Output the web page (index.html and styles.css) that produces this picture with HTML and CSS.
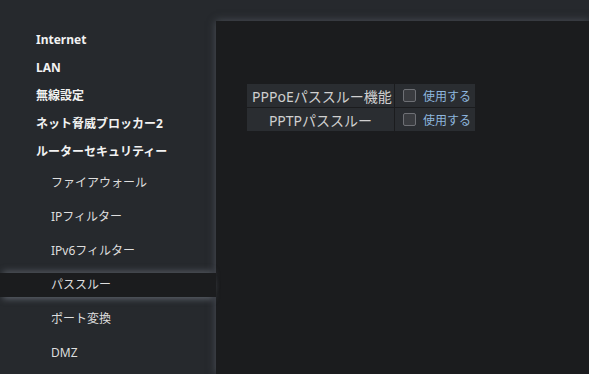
FILE: index.html
```html
<!DOCTYPE html>
<html lang="ja">

<head>
    <meta charset="UTF-8">
    <meta name="viewport" content="width=device-width, initial-scale=1.0">
    <title>パススルー</title>
    <link rel="stylesheet" href="styles.css">
</head>

<body>
    <div class="layout">
        <nav class="sidebar">
            <ul class="menu">
                <li class="menu__item">Internet</li>
                <li class="menu__item">LAN</li>
                <li class="menu__item">無線設定</li>
                <li class="menu__item">ネット脅威ブロッカー2</li>
                <li class="menu__item">ルーターセキュリティー</li>
            </ul>
            <ul class="submenu">
                <li class="submenu__item">ファイアウォール</li>
                <li class="submenu__item">IPフィルター</li>
                <li class="submenu__item">IPv6フィルター</li>
                <li class="submenu__item submenu__item--active">パススルー</li>
                <li class="submenu__item">ポート変換</li>
                <li class="submenu__item">DMZ</li>
            </ul>
        </nav>

        <main class="content">
            <table class="settings">
                <tr>
                    <th class="settings__label">PPPoEパススルー機能</th>
                    <td class="settings__value">
                        <label class="check"><span class="check__box"></span>使用する</label>
                    </td>
                </tr>
                <tr>
                    <th class="settings__label">PPTPパススルー</th>
                    <td class="settings__value">
                        <label class="check"><span class="check__box"></span>使用する</label>
                    </td>
                </tr>
            </table>
        </main>
    </div>
</body>

</html>
```

FILE: styles.css
```css
html,
body {
    margin: 0;
    height: 100%;
}

body {
    background-color: #26292d;
    font-family: "Noto Sans", "Noto Sans CJK JP", sans-serif;
    overflow: hidden;
}

.layout {
    display: flex;
    height: 100%;
}

.sidebar {
    width: 216px;
    flex-shrink: 0;
    padding-top: 26px;
    position: relative;
    z-index: 2;
}

.menu,
.submenu {
    list-style: none;
    margin: 0;
    padding: 0;
}

.menu__item {
    height: 28px;
    line-height: 28px;
    padding-left: 36px;
    font-size: 12px;
    font-weight: 700;
    color: #f2f2f2;
}

.submenu {
    display: flex;
    flex-direction: column;
    gap: 10px;
    margin-top: 5px;
}

.submenu__item {
    height: 24px;
    line-height: 24px;
    padding-left: 51px;
    font-size: 12px;
    color: #dedede;
}

.submenu__item--active {
    background-color: #1b1c1e;
    box-shadow: 0 5px 6px -3px rgba(110, 115, 125, 0.75),
        0 -5px 6px -3px rgba(110, 115, 125, 0.6);
}

.content {
    flex: 1;
    margin-top: 21px;
    background-color: #1b1c1e;
    box-shadow: 0 0 8px rgba(110, 115, 125, 0.55);
    padding: 62px 0 0 30px;
    position: relative;
    z-index: 1;
}

.settings {
    border-collapse: separate;
    border-spacing: 1px;
    table-layout: fixed;
}

.settings th,
.settings td {
    background-color: #2a2d31;
    height: 23px;
    padding: 0;
}

.settings__label {
    width: 147px;
    max-width: 147px;
    padding: 0 5px !important;
    box-sizing: border-box;
    overflow: hidden;
    white-space: nowrap;
    font-size: 14px;
    font-weight: 400;
    color: #d0d0d0;
    text-align: center;
}

.settings__value {
    width: 80px;
    padding-left: 8px !important;
    box-sizing: border-box;
}

.check {
    display: flex;
    align-items: center;
    gap: 7px;
    font-size: 12px;
    color: #8db6de;
}

.check__box {
    width: 11px;
    height: 11px;
    border: 1px solid #6e7075;
    border-radius: 2px;
    background-color: #3a3c40;
}
```
